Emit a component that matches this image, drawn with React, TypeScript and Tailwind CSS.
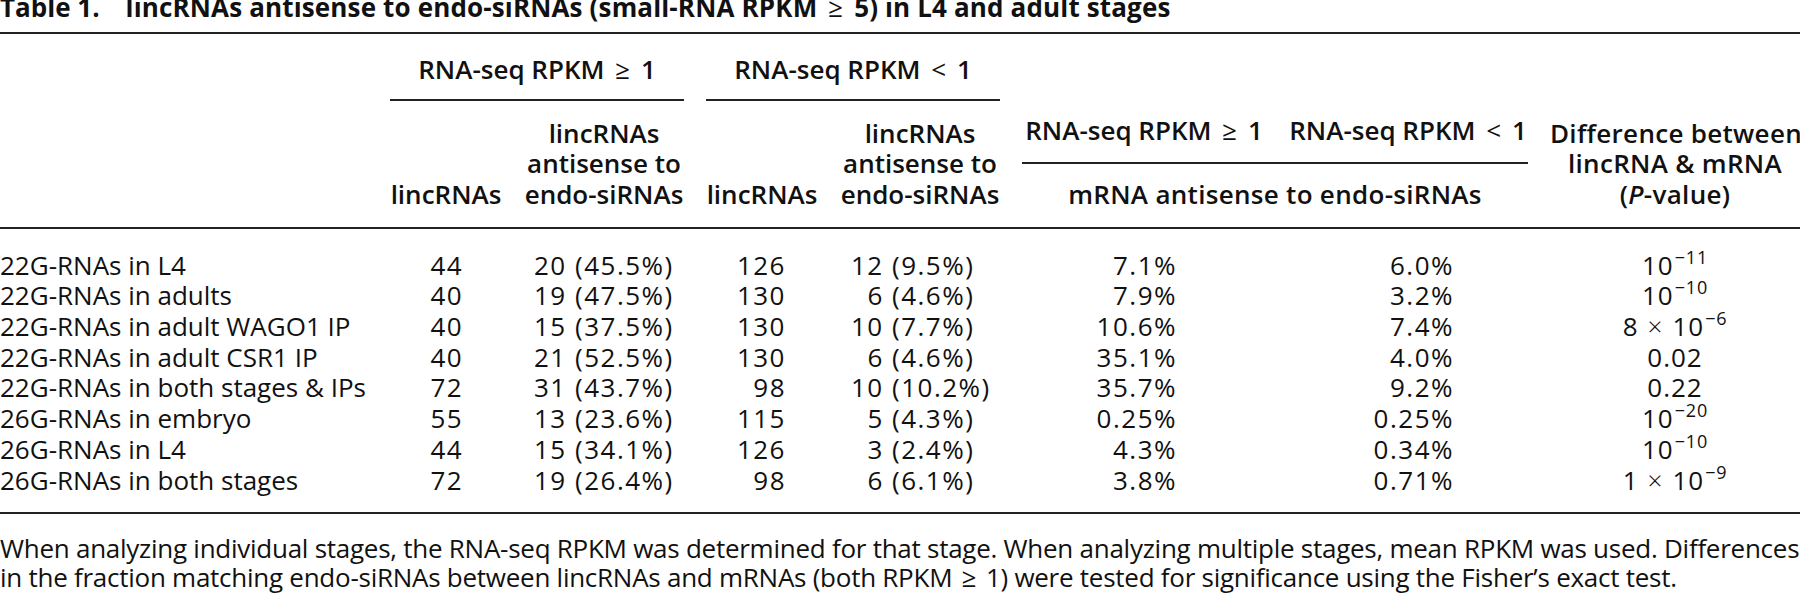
import React from "react";

type Row = {
  label: string;
  a: string;
  b: [string, string];
  c: string;
  d: [string, string];
  e: string;
  f: string;
  p: { pre?: string; base: string; exp?: string };
};

const rows: Row[] = [
  { label: "22G-RNAs in L4", a: "44", b: ["20", "45.5%"], c: "126", d: ["12", "9.5%"], e: "7.1%", f: "6.0%", p: { base: "10", exp: "\u221211" } },
  { label: "22G-RNAs in adults", a: "40", b: ["19", "47.5%"], c: "130", d: ["6", "4.6%"], e: "7.9%", f: "3.2%", p: { base: "10", exp: "\u221210" } },
  { label: "22G-RNAs in adult WAGO1 IP", a: "40", b: ["15", "37.5%"], c: "130", d: ["10", "7.7%"], e: "10.6%", f: "7.4%", p: { pre: "8", base: "10", exp: "\u22126" } },
  { label: "22G-RNAs in adult CSR1 IP", a: "40", b: ["21", "52.5%"], c: "130", d: ["6", "4.6%"], e: "35.1%", f: "4.0%", p: { base: "0.02" } },
  { label: "22G-RNAs in both stages & IPs", a: "72", b: ["31", "43.7%"], c: "98", d: ["10", "10.2%"], e: "35.7%", f: "9.2%", p: { base: "0.22" } },
  { label: "26G-RNAs in embryo", a: "55", b: ["13", "23.6%"], c: "115", d: ["5", "4.3%"], e: "0.25%", f: "0.25%", p: { base: "10", exp: "\u221220" } },
  { label: "26G-RNAs in L4", a: "44", b: ["15", "34.1%"], c: "126", d: ["3", "2.4%"], e: "4.3%", f: "0.34%", p: { base: "10", exp: "\u221210" } },
  { label: "26G-RNAs in both stages", a: "72", b: ["19", "26.4%"], c: "98", d: ["6", "6.1%"], e: "3.8%", f: "0.71%", p: { pre: "1", base: "10", exp: "\u22129" } },
];

const COLS = "grid grid-cols-[368px_112px_160px_112px_160px_244px_240px_250px] gap-x-[22px]";

function Count({ n, pct }: { n: string; pct: string }) {
  return (
    <span>
      {n.length === 1 ? <span className="invisible">0</span> : null}
      {n} ({pct})
    </span>
  );
}

function PVal({ p }: { p: Row["p"] }) {
  return (
    <span className="whitespace-nowrap">
      {p.pre ? (
        <>
          {p.pre}
          <span className="mx-[9px] font-light">{"\u00d7"}</span>
        </>
      ) : null}
      {p.base}
      {p.exp ? (
        <sup className="relative top-[-11px] ml-[1px] align-baseline text-[18px] leading-none tracking-[0.8px]">{p.exp}</sup>
      ) : null}
    </span>
  );
}

function Ge() {
  return <span className="mx-[4px] font-normal">{"\u2265"}</span>;
}

export default function App() {
  return (
    <div className="w-[1800px] h-[596px] overflow-hidden bg-white text-[#111] font-['Open_Sans',sans-serif] text-[26px]">
      {/* Title */}
      <div className="mt-[-6px] leading-[26px] whitespace-nowrap font-bold">
        <span className="mr-[26px]">Table 1.</span>
        <span className="tracking-[0.15px]">
          lincRNAs antisense to endo-siRNAs (small-RNA RPKM <Ge /> 5) in L4 and adult stages
        </span>
      </div>
      <div className="mt-[12px] border-t-2 border-[#222]" />

      {/* Header */}
      <div className={`${COLS} items-end pt-[20px] pb-[18px] font-semibold`}>
        <div />
        {/* Group 1 */}
        <div className="col-span-2 flex flex-col">
          <div className="text-center leading-[30.5px] whitespace-nowrap">
            RNA-seq RPKM <Ge /> 1
          </div>
          <div className="mt-[14.5px] border-t-2 border-[#222]" />
          <div className="mt-[16.65px] grid grid-cols-[112px_160px] gap-x-[22px] items-end leading-[30.5px] text-center">
            <div>lincRNAs</div>
            <div>
              lincRNAs
              <br />
              antisense to
              <br />
              endo-siRNAs
            </div>
          </div>
        </div>
        {/* Group 2 */}
        <div className="col-span-2 flex flex-col">
          <div className="text-center leading-[30.5px] whitespace-nowrap">
            RNA-seq RPKM <span className="mx-[4px] font-normal">{"<"}</span> 1
          </div>
          <div className="mt-[14.5px] border-t-2 border-[#222]" />
          <div className="mt-[16.65px] grid grid-cols-[112px_160px] gap-x-[22px] items-end leading-[30.5px] text-center">
            <div>lincRNAs</div>
            <div>
              lincRNAs
              <br />
              antisense to
              <br />
              endo-siRNAs
            </div>
          </div>
        </div>
        {/* mRNA */}
        <div className="col-span-2 flex flex-col leading-[30.5px]">
          <div className="grid grid-cols-[244px_240px] gap-x-[22px] text-center whitespace-nowrap">
            <div>
              RNA-seq RPKM <Ge /> 1
            </div>
            <div>
              RNA-seq RPKM <span className="mx-[4px] font-normal">{"<"}</span> 1
            </div>
          </div>
          <div className="mt-[17px] border-t-2 border-[#222]" />
          <div className="mt-[14.5px] text-center tracking-[0.3px]">mRNA antisense to endo-siRNAs</div>
        </div>
        {/* P */}
        <div className="text-center leading-[30.5px] whitespace-nowrap tracking-[0.3px]">
          Difference between
          <br />
          lincRNA &amp; mRNA
          <br />(<span className="italic">P</span>-value)
        </div>
      </div>

      <div className="border-t-2 border-[#222]" />

      {/* Body */}
      <div className="pt-[20.5px] pb-[16.5px] leading-[30.7px]">
        {rows.map((r) => (
          <div key={r.label} className={COLS}>
            <div className="whitespace-nowrap">{r.label}</div>
            <div className="text-center tracking-[1.5px] pl-[1.5px]">{r.a}</div>
            <div className="pl-[10px] whitespace-nowrap tracking-[1.5px]">
              <Count n={r.b[0]} pct={r.b[1]} />
            </div>
            <div className="text-right pr-[32px] tracking-[1.5px]">{r.c}</div>
            <div className="pl-[11px] whitespace-nowrap tracking-[1.5px]">
              <Count n={r.d[0]} pct={r.d[1]} />
            </div>
            <div className="text-right pr-[89px] tracking-[1.5px]">{r.e}</div>
            <div className="text-right pr-[74px] tracking-[1.5px]">{r.f}</div>
            <div className="text-center tracking-[1px]">
              <PVal p={r.p} />
            </div>
          </div>
        ))}
      </div>

      <div className="border-t-2 border-[#222]" />

      {/* Footnote */}
      <div className="pt-[20px] leading-[29px] whitespace-nowrap tracking-[-0.26px]">
        When analyzing individual stages, the RNA-seq RPKM was determined for that stage. When analyzing multiple stages, mean RPKM was used. Differences
        <br />
        in the fraction matching endo-siRNAs between lincRNAs and mRNAs (both RPKM <span className="mx-[3px]">{"\u2265"}</span> 1) were tested for significance using the Fisher{"\u2019"}s exact test.
      </div>
    </div>
  );
}
